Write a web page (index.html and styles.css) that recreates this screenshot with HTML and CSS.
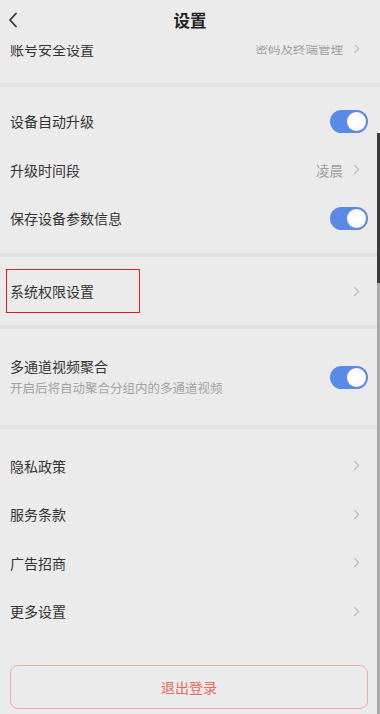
FILE: index.html
```html
<!DOCTYPE html>
<html lang="zh-CN">
<head>
<meta charset="utf-8">
<title>设置</title>
<link rel="stylesheet" href="styles.css">
</head>
<body>
<div class="page">
  <header class="topbar">
    <svg class="back" width="10" height="16" viewBox="0 0 10 16"><path d="M8 1.5 L2 8 L8 14.5" fill="none" stroke="#333" stroke-width="1.8" stroke-linecap="round" stroke-linejoin="round"/></svg>
    <h1 class="title">设置</h1>
  </header>

  <div class="content">
    <section class="group group-first">
      <div class="clip">
        <div class="row">
          <span class="label">账号安全设置</span>
          <span class="extra extra-small">密码及终端管理</span>
          <svg class="chev" width="7" height="11" viewBox="0 0 7 11"><path d="M1.2 1 L5.6 5.5 L1.2 10" fill="none" stroke="#bdbdbd" stroke-width="1.2"/></svg>
        </div>
      </div>
    </section>

    <section class="group">
      <div class="row">
        <span class="label">设备自动升级</span>
        <span class="toggle"><span class="knob"></span></span>
      </div>
      <div class="row">
        <span class="label">升级时间段</span>
        <span class="extra">凌晨</span>
        <svg class="chev" width="7" height="11" viewBox="0 0 7 11"><path d="M1.2 1 L5.6 5.5 L1.2 10" fill="none" stroke="#bdbdbd" stroke-width="1.2"/></svg>
      </div>
      <div class="row">
        <span class="label">保存设备参数信息</span>
        <span class="toggle"><span class="knob"></span></span>
      </div>
    </section>

    <section class="group">
      <div class="row row-marked">
        <span class="label">系统权限设置</span>
        <svg class="chev" width="7" height="11" viewBox="0 0 7 11"><path d="M1.2 1 L5.6 5.5 L1.2 10" fill="none" stroke="#bdbdbd" stroke-width="1.2"/></svg>
        <span class="mark"></span>
      </div>
    </section>

    <section class="group">
      <div class="row row-tall">
        <div class="stack">
          <span class="label">多通道视频聚合</span>
          <span class="sub">开启后将自动聚合分组内的多通道视频</span>
        </div>
        <span class="toggle"><span class="knob"></span></span>
      </div>
    </section>

    <section class="group group-last">
      <div class="row">
        <span class="label">隐私政策</span>
        <svg class="chev" width="7" height="11" viewBox="0 0 7 11"><path d="M1.2 1 L5.6 5.5 L1.2 10" fill="none" stroke="#bdbdbd" stroke-width="1.2"/></svg>
      </div>
      <div class="row">
        <span class="label">服务条款</span>
        <svg class="chev" width="7" height="11" viewBox="0 0 7 11"><path d="M1.2 1 L5.6 5.5 L1.2 10" fill="none" stroke="#bdbdbd" stroke-width="1.2"/></svg>
      </div>
      <div class="row">
        <span class="label">广告招商</span>
        <svg class="chev" width="7" height="11" viewBox="0 0 7 11"><path d="M1.2 1 L5.6 5.5 L1.2 10" fill="none" stroke="#bdbdbd" stroke-width="1.2"/></svg>
      </div>
      <div class="row">
        <span class="label">更多设置</span>
        <svg class="chev" width="7" height="11" viewBox="0 0 7 11"><path d="M1.2 1 L5.6 5.5 L1.2 10" fill="none" stroke="#bdbdbd" stroke-width="1.2"/></svg>
      </div>
    </section>

    <div class="logout-wrap">
      <button class="logout">退出登录</button>
    </div>
  </div>

  <div class="scrollbar"><div class="thumb"></div></div>
</div>
</body>
</html>
```

FILE: styles.css
```css
* { box-sizing: border-box; }

html, body {
  margin: 0;
  padding: 0;
  background: #ebebeb;
}

body {
  font-family: "Noto Sans CJK SC", "Noto Sans", sans-serif;
  color: #333;
}

.page {
  position: relative;
  width: 380px;
  height: 714px;
  overflow: hidden;
  background: #ebebeb;
}

.topbar {
  height: 45px;
  display: flex;
  align-items: center;
  justify-content: center;
  position: relative;
  padding-bottom: 4px;
}

.back {
  position: absolute;
  left: 8px;
  top: 12px;
}

.title {
  margin: 0;
  font-size: 16.5px;
  font-weight: 700;
  color: #222;
  line-height: 1;
}

.content {
  display: flex;
  flex-direction: column;
}

.group {
  padding: 10px 0;
  border-bottom: 4px solid #e2e2e2;
}

.group-first {
  padding-top: 0;
}

.group-last {
  border-bottom: none;
  padding-top: 12px;
  padding-bottom: 0;
}

.clip {
  height: 28px;
  overflow: hidden;
  display: flex;
  flex-direction: column;
  justify-content: flex-end;
}

.clip .row {
  flex: none;
}

.row {
  position: relative;
  height: 48.6px;
  display: flex;
  align-items: center;
  padding: 0 12px 0 10px;
}

.row-tall {
  height: 76px;
}

.label {
  font-size: 14px;
  color: #333;
  line-height: 20px;
}

.stack {
  display: flex;
  flex-direction: column;
  gap: 3px;
  padding-bottom: 2px;
}

.sub {
  font-size: 12.5px;
  color: #a3a3a3;
  line-height: 18px;
}

.extra {
  margin-left: auto;
  font-size: 13.5px;
  color: #a0a0a0;
  margin-right: 10px;
}

.extra-small {
  font-size: 12.5px;
  margin-right: 10px;
}

.chev {
  margin-left: auto;
  margin-right: 8px;
  flex: none;
}

.extra + .chev {
  margin-left: 0;
}

.toggle {
  margin-left: auto;
  width: 38px;
  height: 23px;
  border-radius: 12px;
  background: #5b8ae6;
  display: flex;
  align-items: center;
  justify-content: flex-end;
  padding: 2px;
}

.knob {
  width: 19px;
  height: 19px;
  border-radius: 50%;
  background: #fff;
}

.row-marked .mark {
  position: absolute;
  left: 6px;
  top: 2px;
  width: 134px;
  height: 44px;
  border: 1.5px solid #e31c23;
}

.logout-wrap {
  padding: 29px 12px 0 10px;
}

.logout {
  width: 100%;
  height: 44px;
  border: 1px solid #f4aa9e;
  border-radius: 8px;
  background: transparent;
  font-family: "Noto Sans CJK SC", "Noto Sans", sans-serif;
  font-size: 14px;
  color: #ea6a57;
  display: flex;
  align-items: center;
  justify-content: center;
}

.scrollbar {
  position: absolute;
  right: 0;
  top: 133px;
  bottom: 0;
  width: 3px;
  background: #a9a9a9;
}

.thumb {
  height: 150px;
  background: #3a3a3a;
}
```
